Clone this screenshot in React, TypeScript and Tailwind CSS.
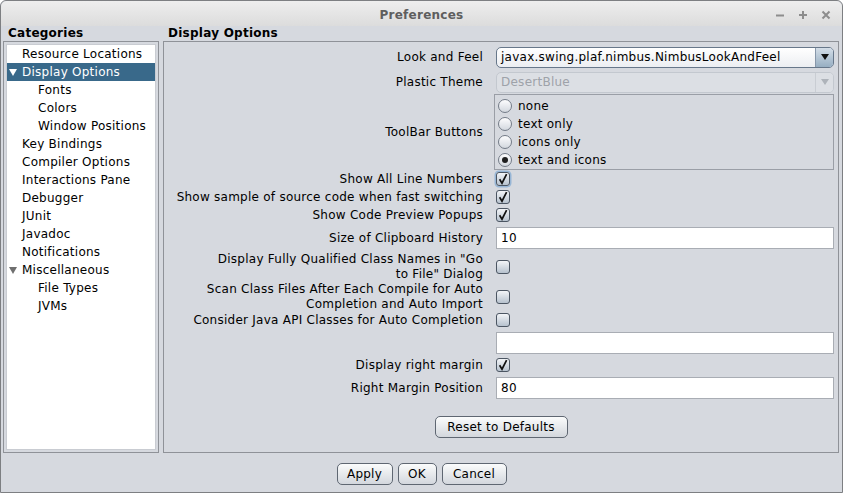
import React from "react";

type TreeItem = { label: string; level: 1 | 2; open?: boolean; selected?: boolean };

const tree: TreeItem[] = [
  { label: "Resource Locations", level: 1 },
  { label: "Display Options", level: 1, open: true, selected: true },
  { label: "Fonts", level: 2 },
  { label: "Colors", level: 2 },
  { label: "Window Positions", level: 2 },
  { label: "Key Bindings", level: 1 },
  { label: "Compiler Options", level: 1 },
  { label: "Interactions Pane", level: 1 },
  { label: "Debugger", level: 1 },
  { label: "JUnit", level: 1 },
  { label: "Javadoc", level: 1 },
  { label: "Notifications", level: 1 },
  { label: "Miscellaneous", level: 1, open: true },
  { label: "File Types", level: 2 },
  { label: "JVMs", level: 2 },
];

function Triangle({ color }: { color: string }) {
  return (
    <svg width="8" height="7" viewBox="0 0 8 7" className="absolute left-[2px] top-[6px]">
      <path d="M0 0 H8 L4 7 Z" fill={color} />
    </svg>
  );
}

function Check({ checked, focus }: { checked?: boolean; focus?: boolean }) {
  return (
    <span
      className={`flex h-[14px] w-[14px] items-center justify-center rounded-[3px] border border-[#4c5663] bg-linear-to-b from-[#f3f5f8] to-[#b7c2ce] ${
        focus ? "shadow-[0_0_0_1.5px_#97b6d6]" : ""
      }`}
    >
      {checked && (
        <svg width="12" height="12" viewBox="0 0 12 12">
          <path d="M2.6 6.2 L5 10.2 L9.6 1.2" fill="none" stroke="#111" strokeWidth="1.7" />
        </svg>
      )}
    </span>
  );
}

function Radio({ selected, label }: { selected?: boolean; label: string }) {
  return (
    <div className="flex h-[18px] items-center gap-[6px] pl-[3px]">
      <span className="flex h-[14px] w-[14px] items-center justify-center rounded-full border border-[#737b87] bg-linear-to-b from-[#fdfdfe] to-[#d3d8df]">
        {selected && <span className="h-[6px] w-[6px] rounded-full bg-[#1e1e1e]" />}
      </span>
      <span>{label}</span>
    </div>
  );
}

function Combo({ value, disabled }: { value: string; disabled?: boolean }) {
  return (
    <div
      className={`flex h-[21px] w-[338px] overflow-hidden rounded-[5px] border ${
        disabled
          ? "border-[#c3c8cf] bg-[#dcdfe4] text-[#9ea2a9]"
          : "border-[#67778a] bg-linear-to-b from-white to-[#eceef2] text-black"
      }`}
    >
      <span className="flex-1 pl-[4px] leading-[19px]">{value}</span>
      <span
        className={`flex w-[18px] items-center justify-center border-l ${
          disabled
            ? "border-[#c9cdd3] bg-[#dcdfe4]"
            : "border-[#8797aa] bg-linear-to-b from-[#d4dee8] to-[#97aec2]"
        }`}
      >
        <svg width="8" height="6" viewBox="0 0 8 6">
          <path d="M0 0 H8 L4 6 Z" fill={disabled ? "#aeb3ba" : "#111"} />
        </svg>
      </span>
    </div>
  );
}

function Field({ value }: { value?: string }) {
  return (
    <div className="h-[22px] w-[338px] border border-[#a9adb4] bg-white pl-[4px] leading-[20px]">
      {value}
    </div>
  );
}

function Button({ label, w }: { label: string; w: string }) {
  return (
    <button
      className={`${w} h-[22px] rounded-[5px] border border-[#5f6772] bg-linear-to-b from-[#fbfcfc] to-[#d3d7dd] text-[12px] leading-[20px] tracking-[0.25px] text-black`}
    >
      {label}
    </button>
  );
}

function Row({ h, mt, label, children }: { h: string; mt?: string; label?: React.ReactNode; children?: React.ReactNode }) {
  return (
    <div className={`flex ${h} ${mt ?? ""} items-center`}>
      <div className="w-[319px] text-right leading-[15px]">{label}</div>
      <div className="ml-[13px] flex w-[338px] items-center">{children}</div>
    </div>
  );
}

export default function App() {
  return (
    <div className="h-[493px] w-[843px] overflow-hidden bg-white font-['DejaVu_Sans',sans-serif] text-[12px] tracking-[0.25px] text-black">
      <div className="flex h-full flex-col rounded-t-[6px] border border-[#7d7f82] bg-[#d6d9df]">
        {/* title bar */}
        <div className="relative flex h-[25px] shrink-0 items-center justify-center rounded-t-[6px] bg-linear-to-b from-[#eeeeee] to-[#dcdcdc]">
          <span className="pt-[2px] font-bold text-[#5e5e5e]">Preferences</span>
          <div className="absolute right-[11px] top-[9px] flex items-center gap-[13px]">
            <svg width="10" height="10" viewBox="0 0 10 10">
              <path d="M1 5.5 H9" stroke="#8d8d8d" strokeWidth="2" />
            </svg>
            <svg width="10" height="10" viewBox="0 0 10 10">
              <path d="M1 5 H9 M5 1 V9" stroke="#8d8d8d" strokeWidth="2" />
            </svg>
            <svg width="10" height="10" viewBox="0 0 10 10">
              <path d="M1.5 1.5 L8.5 8.5 M8.5 1.5 L1.5 8.5" stroke="#8d8d8d" strokeWidth="2" />
            </svg>
          </div>
        </div>

        {/* body */}
        <div className="flex h-[427px] shrink-0 gap-[4px] pl-[2px] pr-[3px]">
          <div className="flex w-[156px] flex-col">
            <div className="h-[15px] pl-[5px] font-bold leading-[14px]">Categories</div>
            <div className="flex-1 border border-[#8f9298] p-[2px]">
              <div className="h-full border border-[#c9ccd2] bg-white">
                {tree.map((t) => (
                  <div
                    key={t.label}
                    className={`relative h-[18px] leading-[18px] ${t.level === 1 ? "pl-[15px]" : "pl-[31px]"} ${
                      t.selected ? "bg-[#39698a] text-white" : ""
                    }`}
                  >
                    {t.open && <Triangle color={t.selected ? "#ffffff" : "#6f6f6f"} />}
                    {t.label}
                  </div>
                ))}
              </div>
            </div>
          </div>

          <div className="flex flex-1 flex-col">
            <div className="h-[15px] pl-[5px] font-bold leading-[14px]">Display Options</div>
            <div className="flex flex-1 flex-col border border-[#8f9298] pt-[4px]">
              <Row h="h-[22px]" label="Look and Feel">
                <Combo value="javax.swing.plaf.nimbus.NimbusLookAndFeel" />
              </Row>
              <Row h="h-[22px]" mt="mt-[3px]" label="Plastic Theme">
                <Combo value="DesertBlue" disabled />
              </Row>
              <Row h="h-[76px]" mt="mt-[1px]" label="ToolBar Buttons">
                <div className="-ml-[2px] h-[76px] w-[340px] border border-[#9a9ea6] pt-[2px]">
                  <Radio label="none" />
                  <Radio label="text only" />
                  <Radio label="icons only" />
                  <Radio label="text and icons" selected />
                </div>
              </Row>
              <Row h="h-[18px]" label="Show All Line Numbers">
                <Check checked focus />
              </Row>
              <Row h="h-[18px]" label="Show sample of source code when fast switching">
                <Check checked />
              </Row>
              <Row h="h-[18px]" label="Show Code Preview Popups">
                <Check checked />
              </Row>
              <Row h="h-[22px]" mt="mt-[3px]" label="Size of Clipboard History">
                <Field value="10" />
              </Row>
              <Row
                h="h-[32px]"
                mt="mt-[2px]"
                label={
                  <>
                    Display Fully Qualified Class Names in "Go
                    <br />
                    to File" Dialog
                  </>
                }
              >
                <Check />
              </Row>
              <Row
                h="h-[28px]"
                label={
                  <>
                    Scan Class Files After Each Compile for Auto
                    <br />
                    Completion and Auto Import
                  </>
                }
              >
                <Check />
              </Row>
              <Row h="h-[18px]" label="Consider Java API Classes for Auto Completion">
                <Check />
              </Row>
              <Row h="h-[22px]" mt="mt-[3px]">
                <Field />
              </Row>
              <Row h="h-[18px]" mt="mt-[2px]" label="Display right margin">
                <Check checked />
              </Row>
              <Row h="h-[22px]" mt="mt-[3px]" label="Right Margin Position">
                <Field value="80" />
              </Row>
              <div className="mt-[17px] flex justify-center">
                <Button label="Reset to Defaults" w="w-[133px]" />
              </div>
            </div>
          </div>
        </div>

        {/* buttons */}
        <div className="flex flex-1 items-start justify-center gap-[5px] pt-[10px]">
          <Button label="Apply" w="w-[56px]" />
          <Button label="OK" w="w-[39px]" />
          <Button label="Cancel" w="w-[65px]" />
        </div>
      </div>
    </div>
  );
}
